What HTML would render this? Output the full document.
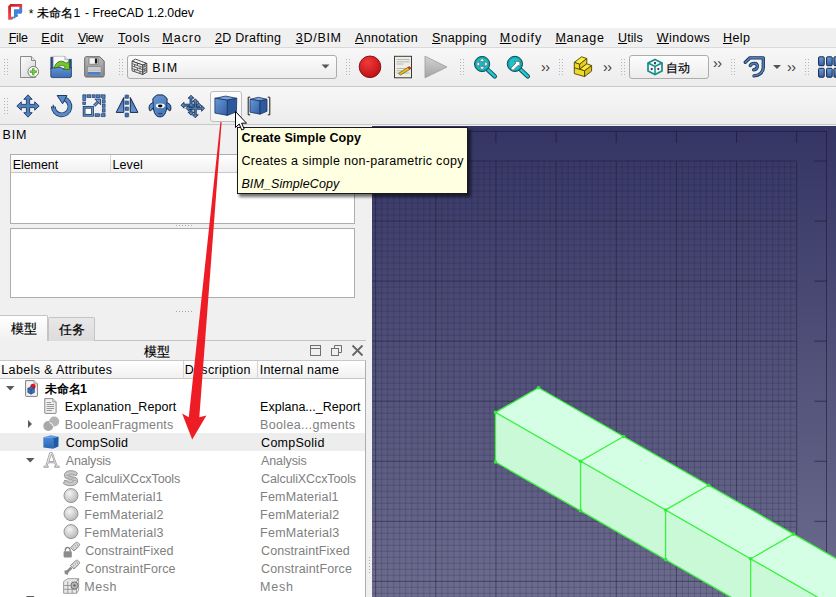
<!DOCTYPE html>
<html><head><meta charset="utf-8">
<style>
*{box-sizing:border-box}
html,body{margin:0;padding:0}
body{width:836px;height:597px;overflow:hidden;position:relative;background:#f0f0f0;font-family:"Liberation Sans",sans-serif;color:#000;font-size:12.5px}
.a{position:absolute}
.t{position:absolute;white-space:nowrap;line-height:1}
.u{text-decoration:underline;text-underline-offset:1px;text-decoration-thickness:1px}
.grip{position:absolute;width:5px;height:17px;background-image:radial-gradient(circle,#b4b4b4 0.8px,transparent 1px);background-size:3px 3px}
.chev{position:absolute;font-size:13px;color:#333;letter-spacing:-1px}
svg{position:absolute;overflow:visible}
</style></head><body>

<!-- title bar -->
<div class="a" style="left:0;top:0;width:836px;height:28px;background:#fff"></div>
<svg style="left:0;top:0" width="30" height="26" viewBox="0 0 30 26">
  <defs><linearGradient id="lr" x1="0" y1="0" x2="0.6" y2="1"><stop offset="0" stop-color="#c8141e"/><stop offset="1" stop-color="#ff5a64"/></linearGradient></defs>
  <path d="M8.2 6.2L10.4 4H22.1V7.5L19.3 10.72V6.8H11V16.7H14.1L11.5 19.7H8.2z" fill="url(#lr)"/>
  <path d="M22.1 6.8V12.3L21.2 13.4H17.2V14.4L18.2 15.4L17.4 17.1L15.9 17L14.8 18.6L13.4 18.2L12.2 19.7H11.2z" fill="#3a86dc"/>
  <path d="M14 9.2H20L21.2 8L22.1 8.6V12.6L21 13.4H17.2V15.5L14 17.5z" fill="#3a86dc"/>
</svg>
<div class="t" style="left:36.5px;top:6.5px;font-size:12px;-webkit-text-stroke:0.25px #000">未命名</div><div class="t" style="left:73.5px;top:7px;font-size:12.3px">1</div>
<div class="t" style="left:85px;top:6.5px;font-size:12px">-</div>

<!-- menubar -->
<div class="a" style="left:0;top:28px;width:836px;height:20px;background:#f0f0f0;border-bottom:1px solid #dadada"></div>

<!-- toolbar 1 -->
<div class="a" style="left:0;top:48px;width:836px;height:39px;background:linear-gradient(#f7f7f7,#ececec);border-bottom:1px solid #c9c9c9"></div>
<!-- toolbar 2 -->
<div class="a" style="left:0;top:87px;width:836px;height:38px;background:linear-gradient(#f7f7f7,#ececec);border-bottom:1px solid #c9c9c9"></div>

<!-- grips -->
<div class="grip" style="left:3px;top:58px"></div>
<div class="grip" style="left:118px;top:58px"></div>
<div class="grip" style="left:345px;top:58px"></div>
<div class="grip" style="left:459px;top:58px"></div>
<div class="grip" style="left:558px;top:58px"></div>
<div class="grip" style="left:620px;top:58px"></div>
<div class="grip" style="left:730px;top:58px"></div>
<div class="grip" style="left:804px;top:58px"></div>
<div class="grip" style="left:3px;top:97px"></div>

<!-- new doc -->
<svg style="left:19px;top:55px" width="20" height="24" viewBox="0 0 20 24">
  <defs><linearGradient id="pg" x1="0" y1="0" x2="1" y2="1"><stop offset="0" stop-color="#fdfdfd"/><stop offset="1" stop-color="#d4d4d4"/></linearGradient></defs>
  <path d="M1.5 1.5h11l4 4v17h-15z" fill="url(#pg)" stroke="#8a8a8a"/>
  <path d="M12.5 1.5v4h4" fill="#e8e8e8" stroke="#8a8a8a"/>
  <circle cx="14.3" cy="16.7" r="5.3" fill="#fafafa" stroke="#7a7a7a"/>
  <path d="M14.3 13.2v7M10.8 16.7h7" stroke="#3c9a1c" stroke-width="2.2"/>
  <path d="M14.3 13.6v6.2M11.2 16.7h6.2" stroke="#7ad23a" stroke-width="1"/>
</svg>
<!-- open -->
<svg style="left:50px;top:56px" width="23" height="23" viewBox="0 0 23 23">
  <defs><linearGradient id="of" x1="0" y1="0" x2="0" y2="1"><stop offset="0" stop-color="#5f92d2"/><stop offset="1" stop-color="#3d6eb4"/></linearGradient></defs>
  <path d="M0.8 1.2h2.6v12h-2.6z" fill="#24508e" stroke="#1a3460" stroke-width="0.6"/>
  <path d="M18.8 3.3h2.6v9h-2.6z" fill="#24508e" stroke="#1a3460" stroke-width="0.6"/>
  <path d="M3.2 0.3h11.6l3.4 3.4v9.5h-15z" fill="#fbfbfb" stroke="#a0a0a0" stroke-width="0.6"/>
  <path d="M14.8 0.3v3.4h3.4" fill="#e0e0e0" stroke="#909090" stroke-width="0.6"/>
  <path d="M0.8 12.2C4 11.6 6 11.8 8.5 11.3C10.5 10.9 12.5 12.6 15 12.9C17 13.1 19 12.1 21.4 11.5V20.2C21.4 21 20.8 21.6 20 21.6H2.2C1.4 21.6 0.8 21 0.8 20.2z" fill="url(#of)" stroke="#1d3560" stroke-width="0.8"/>
  <path d="M4.3 11.9C5 8 8 5.1 11.3 5.2C13.5 5.3 15 6.3 16 7.2L19.3 5.6L19.6 13.6L13 13.2L15.4 11.1C14.5 10.1 13 9.4 11.5 9.6C9.5 9.8 8 10.8 7.3 11.5z" fill="#72c62c" stroke="#2e6a10" stroke-width="0.8" stroke-linejoin="round"/>
</svg>
<!-- save -->
<svg style="left:84px;top:56px" width="21" height="22" viewBox="0 0 21 22">
  <defs><linearGradient id="fg" x1="0" y1="0" x2="0" y2="1"><stop offset="0" stop-color="#b8b8b8"/><stop offset="1" stop-color="#8e8e8e"/></linearGradient></defs>
  <path d="M0.7 2.2c0-.8.7-1.5 1.5-1.5h13.6l4.4 4.4v14.4c0 .8-.7 1.5-1.5 1.5h-16.5c-.8 0-1.5-.7-1.5-1.5z" fill="url(#fg)" stroke="#5a5a5a" stroke-width="0.9"/>
  <rect x="4.8" y="1.8" width="9.6" height="6.6" rx="0.6" fill="#cfcfcf" stroke="#7a7a7a" stroke-width="0.7"/>
  <rect x="6" y="2.5" width="4.5" height="5" fill="#f4f4f4"/>
  <rect x="11" y="2.6" width="2.2" height="4.8" fill="#1a1a1a"/>
  <rect x="3.3" y="10.8" width="13.8" height="8.2" fill="#dcdcdc" stroke="#7a7a7a" stroke-width="0.7"/>
  <path d="M3.6 13h13.2M3.6 14.8h13.2" stroke="#b0b0b0" stroke-width="0.8"/>
  <rect x="3.7" y="16" width="13" height="2.8" fill="#4a80c8"/>
</svg>

<!-- combo -->
<div class="a" style="left:127px;top:55px;width:210px;height:24px;border:1px solid #acacac;border-radius:3px;background:linear-gradient(#fdfdfd,#ececec)"></div>
<svg style="left:131px;top:58px" width="17" height="18" viewBox="0 0 17 18">
  <g stroke="#2a2a2a" stroke-width="0.8" stroke-linejoin="round">
  <path d="M1 3.2L4.4 1.1L15.8 5.4L11.8 7z" fill="#f6f6f6"/>
  <path d="M1 3.2L11.8 7V16.5L1 12.8z" fill="#ececec"/>
  <path d="M11.8 7L15.8 5.4V14.2L11.8 16.5z" fill="#d8d8d8"/>
  </g>
  <g stroke="#4a4a4a" stroke-width="0.8" fill="none">
  <path d="M1 5.6L11.8 9.4M1 8L11.8 11.8M1 10.4L11.8 14.2M11.8 9.4L15.8 7.6M11.8 11.8L15.8 9.8M11.8 14.2L15.8 12"/>
  <path d="M6.4 5.1V7.5M3.7 6.4V8.9M9 8.8V11.2M6.4 9.9V12.3M3.7 11.1V13.6M9 13.2V15.5M13.8 6.2V8.6M13.8 10.8V13.2" stroke-width="0.9"/>
  </g>
</svg>

<svg style="left:321px;top:64px" width="9" height="5" viewBox="0 0 9 5"><path d="M0.5 0.5h8l-4 4z" fill="#555"/></svg>

<!-- macro -->
<svg style="left:358px;top:55px" width="24" height="24" viewBox="0 0 24 24">
  <defs><radialGradient id="rg" cx="0.4" cy="0.3" r="0.8"><stop offset="0" stop-color="#f03a3a"/><stop offset="1" stop-color="#b80c12"/></radialGradient></defs>
  <circle cx="12" cy="11.8" r="10.8" fill="url(#rg)" stroke="#7e0a0a" stroke-width="0.9"/>
</svg>
<svg style="left:393px;top:55px" width="20" height="24" viewBox="0 0 20 24">
  <rect x="1.5" y="1.3" width="17" height="21.5" fill="#eeeee6" stroke="#3a3a3a" stroke-width="1"/>
  <path d="M3.5 4.5h13M3.5 6.8h13M3.5 9h7M3.5 13.5h13M3.5 15.8h6M3.5 18h13" stroke="#b0b0b0" stroke-width="0.9"/>
  <path d="M5.5 18.5l10-6.5 2 2-10 6z" fill="#e6c21a" stroke="#6a5a10" stroke-width="0.7"/>
  <path d="M14.5 12.5l2-1.3 1.8 1.8-1.8 1.4z" fill="#d8202a"/>
</svg>
<svg style="left:424px;top:55px" width="24" height="24" viewBox="0 0 24 24">
  <defs><linearGradient id="gp" x1="0" y1="0" x2="0" y2="1"><stop offset="0" stop-color="#d2d2d2"/><stop offset="1" stop-color="#a4a4a4"/></linearGradient></defs>
  <path d="M1 1.2L23 12 1 22.8z" fill="url(#gp)" stroke="#9a9a9a" stroke-width="0.8"/>
</svg>

<!-- zoom -->
<svg style="left:473px;top:55px" width="24" height="24" viewBox="0 0 24 24">
  <path d="M14.8 14.8l7 6.6" stroke="#0b4e56" stroke-width="4.4" stroke-linecap="round"/>
  <path d="M14.8 14.8l7 6.6" stroke="#22c8d0" stroke-width="2.6" stroke-linecap="round"/>
  <circle cx="9.1" cy="9" r="7.6" fill="#14a6b0" stroke="#0b4e56" stroke-width="1"/>
  <circle cx="9.1" cy="9" r="5.8" fill="#1fc0c8"/>
  <path d="M9.1 3.3l2.5 3h-5zM9.1 14.7l2.5-3h-5zM3.4 9l3-2.5v5zM14.8 9l-3-2.5v5z" fill="#fff" stroke="#333" stroke-width="0.4"/>
  <rect x="7.3" y="7.2" width="3.6" height="3.6" fill="#18b4bc"/>
</svg>
<svg style="left:506px;top:55px" width="24" height="24" viewBox="0 0 24 24">
  <path d="M14.8 14.8l7 6.6" stroke="#0b4e56" stroke-width="4.4" stroke-linecap="round"/>
  <path d="M14.8 14.8l7 6.6" stroke="#22c8d0" stroke-width="2.6" stroke-linecap="round"/>
  <circle cx="8.9" cy="8.9" r="7.6" fill="#14a6b0" stroke="#0b4e56" stroke-width="1"/>
  <circle cx="8.9" cy="8.9" r="5.8" fill="#1fc0c8"/>
  <path d="M4.8 13.2L10 8l-1.6-1.6h5.4v5.4l-1.6-1.6-5.2 5.2z" fill="#fff" stroke="#333" stroke-width="0.5" stroke-linejoin="round"/>
</svg>
<div class="t" style="left:541px;top:59.5px;font-size:14.5px;color:#3a3a3a;letter-spacing:-0.6px">››</div>

<!-- yellow -->
<svg style="left:572px;top:55px" width="22" height="24" viewBox="0 0 22 24">
  <g stroke="#4a420a" stroke-width="0.9" stroke-linejoin="round">
  <path d="M2.3 7.3L9.6 1.8L14.8 3.5L7.6 9.3z" fill="#fbea3a"/>
  <path d="M7.6 9.3L14.8 3.5V8.8L7.6 14.3z" fill="#e6cf1c"/>
  <path d="M7.6 14.3L14.8 8.8L19.6 10.5L12.6 15.8z" fill="#fbea3a"/>
  <path d="M2.3 7.3L7.6 9.3V14.3L12.6 15.8V21.6L2.3 18.6z" fill="#f0da24"/>
  <path d="M12.6 15.8L19.6 10.5V16.1L12.6 21.6z" fill="#dcc416"/>
  <path d="M2.3 12.8L7.6 14.3" fill="none"/>
  </g>
</svg>
<div class="t" style="left:603px;top:59.5px;font-size:14.5px;color:#3a3a3a;letter-spacing:-0.6px">››</div>

<!-- auto button -->
<div class="a" style="left:629px;top:55px;width:80px;height:24px;border:1px solid #acacac;border-radius:3px;background:linear-gradient(#fdfdfd,#ececec)"></div>
<svg style="left:646px;top:58px" width="18" height="18" viewBox="0 0 18 18">
  <path d="M9 1.5l7 3.5v8l-7 3.5-7-3.5v-8z" fill="#f4f4f4" stroke="#168c8c" stroke-width="1.7"/>
  <path d="M2 5l7 3.5 7-3.5M9 8.5v8" fill="none" stroke="#168c8c" stroke-width="1.5"/>
  <path d="M9 4v2.2M4.8 11.3l1.8-.6M13.2 11.3l-1.8-.6" stroke="#111" stroke-width="1.5"/>
</svg>
<div class="t" style="left:665.5px;top:61.5px;font-size:12px;-webkit-text-stroke:0.2px #000">自动</div>
<div class="t" style="left:713px;top:56px;font-size:14.5px;color:#3a3a3a;letter-spacing:-0.6px">››</div>

<!-- hook -->
<svg style="left:743px;top:55px" width="24" height="24" viewBox="0 0 24 24">
  <path d="M2.3 7.3L7 2.8H20.3V12.5C20.3 17.5 16 20.6 11 20.9M7.3 10.6C8 9 9.5 8.3 11.5 8.3C13.3 8.3 14.3 9.5 14.3 11.2C14.3 13 12.8 14.5 10.6 14.8" fill="none" stroke="#1a2e52" stroke-width="3.3" stroke-linecap="round" stroke-linejoin="round"/>
  <path d="M2.3 7.3L7 2.8H20.3V12.5C20.3 17.5 16 20.6 11 20.9M7.3 10.6C8 9 9.5 8.3 11.5 8.3C13.3 8.3 14.3 9.5 14.3 11.2C14.3 13 12.8 14.5 10.6 14.8" fill="none" stroke="#4f7dbc" stroke-width="1.7" stroke-linecap="round" stroke-linejoin="round"/>
</svg>
<svg style="left:773px;top:65px" width="8" height="4" viewBox="0 0 8 4"><path d="M0 0h8l-4 4z" fill="#555"/></svg>
<div class="t" style="left:787px;top:59.5px;font-size:14.5px;color:#3a3a3a;letter-spacing:-0.6px">››</div>

<!-- grid icon -->
<svg style="left:818px;top:56px" width="22" height="22" viewBox="0 0 22 22">
  <defs><linearGradient id="gi" x1="0" y1="0" x2="0" y2="1"><stop offset="0" stop-color="#6e9ed8"/><stop offset="1" stop-color="#3560a6"/></linearGradient></defs>
  <g fill="url(#gi)" stroke="#14244a" stroke-width="1"><rect x="0.6" y="0.8" width="5.6" height="8.9" rx="0.9"/><rect x="0.6" y="12.3" width="5.6" height="8.9" rx="0.9"/><rect x="8.6" y="0.8" width="5.6" height="8.9" rx="0.9"/><rect x="8.6" y="12.3" width="5.6" height="8.9" rx="0.9"/><rect x="15.9" y="0.8" width="5.6" height="8.9" rx="0.9"/><rect x="15.9" y="12.3" width="5.6" height="8.9" rx="0.9"/></g>
</svg>

<!-- ============ toolbar 2 ============ -->
<!-- move -->
<svg style="left:16px;top:94px" width="24" height="24" viewBox="0 0 24 24">
  <path d="M12 0.8l4.2 4.5h-2.6v5.1h5.1v-2.6l4.5 4.2-4.5 4.2v-2.6h-5.1v5.1h2.6l-4.2 4.5-4.2-4.5h2.6v-5.1h-5.1v2.6l-4.5-4.2 4.5-4.2v2.6h5.1v-5.1h-2.6z" fill="#4f82c0" stroke="#1d3a66" stroke-width="0.9" stroke-linejoin="round"/>
</svg>
<!-- rotate -->
<svg style="left:50px;top:94px" width="24" height="24" viewBox="0 0 24 24">
  <path d="M3.3 12.6A8.3 8.3 0 1 0 13.9 4.6" fill="none" stroke="#1d3a66" stroke-width="4.8"/>
  <path d="M3.3 12.6A8.3 8.3 0 1 0 13.9 4.6" fill="none" stroke="#5b8bc8" stroke-width="3.1"/>
  <path d="M3.85 12.4h-1.1" stroke="#1d3a66" stroke-width="3.5"/>
  <path d="M7.1 1.5L16.9 1.5L12.6 9.8z" fill="#5b8bc8" stroke="#1d3a66" stroke-width="1" stroke-linejoin="round"/>
</svg>
<!-- scale -->
<svg style="left:82px;top:94px" width="24" height="24" viewBox="0 0 24 24">
  <g fill="#4f82c4" stroke="#1d3a66" stroke-width="0.7">
   <path d="M0.8 0.8H4V3.6H3.6V6.5H0.8z"/>
   <rect x="5.1" y="0.8" width="3.7" height="2.8"/><rect x="10.1" y="0.8" width="3" height="2.8"/><rect x="14.1" y="0.8" width="4" height="2.8"/>
   <path d="M19.1 0.8H23.1V4.5H20.3V3.6H19.1z"/>
   <rect x="0.8" y="8" width="2.8" height="2.6"/>
   <rect x="20.3" y="5.8" width="2.8" height="3.3"/><rect x="20.3" y="10.6" width="2.8" height="2.7"/><rect x="20.3" y="14.8" width="2.8" height="3.3"/>
   <path d="M20.3 19.6H23.1V22.6H19.1V19.8H20.3z"/>
   <rect x="13" y="19.8" width="4.6" height="2.8"/>
  </g>
  <rect x="2.1" y="13.3" width="8.4" height="8" fill="#fff" stroke="#1d3a66" stroke-width="2.7"/>
  <rect x="2.1" y="13.3" width="8.4" height="8" fill="none" stroke="#6b9ad4" stroke-width="1"/>
  <path d="M12.2 11.8L16.2 7.8" stroke="#1d3a66" stroke-width="3"/>
  <path d="M12.2 11.8L16.2 7.8" stroke="#6b9ad4" stroke-width="1.3"/>
  <path d="M12.8 5h5.8v5.8z" fill="#6b9ad4" stroke="#1d3a66" stroke-width="0.9" stroke-linejoin="round"/>
</svg>
<!-- mirror -->
<svg style="left:115px;top:94px" width="24" height="24" viewBox="0 0 24 24">
  <defs><linearGradient id="mg" x1="0" y1="0" x2="0" y2="1"><stop offset="0" stop-color="#3d6db0"/><stop offset="1" stop-color="#6d9ad6"/></linearGradient></defs>
  <path d="M1.2 18.4L8.8 3.5V18.4z" fill="url(#mg)" stroke="#14284a" stroke-width="1" stroke-linejoin="round"/>
  <path d="M22.9 18.4L15.3 3.5V18.4z" fill="url(#mg)" stroke="#14284a" stroke-width="1" stroke-linejoin="round"/>
  <g fill="#3d6db0" stroke="#1d3a66" stroke-width="0.5"><rect x="10" y="0.9" width="3.7" height="3.5" rx="0.6"/><rect x="10" y="6.9" width="3.7" height="3.6" rx="0.6"/><rect x="10" y="12.9" width="3.7" height="3.6" rx="0.6"/><rect x="10" y="19" width="3.7" height="4" rx="0.6"/></g>
</svg>
<!-- sheep -->
<svg style="left:148px;top:94px" width="24" height="24" viewBox="0 0 24 24">
  <defs><linearGradient id="sg" x1="0" y1="0" x2="1" y2="1"><stop offset="0" stop-color="#6f9cd6"/><stop offset="1" stop-color="#3d6cae"/></linearGradient></defs>
  <path d="M5.2 8.3C4.3 6 4.8 3.6 7 2.6C8.3 0.9 10.5 0.5 12 1.1C13.5 0.5 15.7 0.9 17 2.6C19.2 3.6 19.7 6 18.8 8.3L21.8 10.3C23.2 11.8 23.2 15 22.3 16.6C21.2 17.2 19.6 15.6 18.8 13.6C18.4 17 17 20.5 15.5 21.8C14.5 22.6 13 22.9 12 22.9C11 22.9 9.5 22.6 8.5 21.8C7 20.5 5.6 17 5.2 13.6C4.4 15.6 2.8 17.2 1.7 16.6C0.8 15 0.8 11.8 2.2 10.3z" fill="url(#sg)" stroke="#14284a" stroke-width="1" stroke-linejoin="round"/>
  <path d="M5.5 8.5C5.2 10 5.3 12 5.4 13.5M18.5 8.5C18.8 10 18.7 12 18.6 13.5" fill="none" stroke="#14284a" stroke-width="0.7"/>
  <ellipse cx="12.3" cy="11.8" rx="4.5" ry="2.3" fill="#fff"/>
  <ellipse cx="12.2" cy="12" rx="2.3" ry="1.4" fill="#0a0a0a"/>
  <path d="M10.3 19.2c1.1.7 2.6.7 3.7 0" stroke="#14284a" stroke-width="0.9" fill="none"/>
</svg>
<!-- move array -->
<svg style="left:181px;top:94px" width="24" height="24" viewBox="0 0 24 24">
  <g fill="#4f82c0" stroke="#14284a" stroke-width="0.8" stroke-linejoin="round">
  <path d="M10 1.2l3 3h-2v6h6v-2l3 3-3 3v-2h-6v6h2l-3 3-3-3h2v-6h-6v2l-3-3 3-3v2h6v-6h-2z"/>
  <path d="M14.3 4.8l3 3h-2v5.5h5.3v-2l3 3-3 3v-2h-5.3v5.5h2l-3 3-3-3h2v-5.5h-5.3v2l-3-3 3-3v2h5.3v-5.5h-2z"/>
  </g>
</svg>
<!-- simple copy pressed -->
<div class="a" style="left:210px;top:91px;width:32px;height:31px;border:1px solid #bdbdbd;border-radius:3px;background:linear-gradient(#fcfcfc,#f4f4f4)"></div>
<svg style="left:214px;top:95px" width="24" height="22" viewBox="0 0 24 22">
  <defs><linearGradient id="cf" x1="0" y1="0" x2="1" y2="1"><stop offset="0" stop-color="#6a9ad6"/><stop offset="1" stop-color="#2f5ea6"/></linearGradient></defs>
  <path d="M0.9 3.3l10.7-2.2 11.2 2.2-9.4 1.8z" fill="#7aa6e0" stroke="#1d3560" stroke-width="0.8" stroke-linejoin="round"/>
  <path d="M0.9 3.3l12.5 1.8v15.3l-12.5-2.3z" fill="url(#cf)" stroke="#1d3560" stroke-width="0.8" stroke-linejoin="round"/>
  <path d="M13.4 5.1l9.4-1.8-.4 13.5-9 3.6z" fill="#2d5a9c" stroke="#1d3560" stroke-width="0.8" stroke-linejoin="round"/>
</svg>
<!-- compound -->
<svg style="left:247px;top:96px" width="24" height="20" viewBox="0 0 24 20">
  <path d="M3.2 1.2H1.2v17.6h2M20.8 1.2h2v17.6h-2" fill="none" stroke="#1a1a1a" stroke-width="1"/>
  <path d="M3 3.3l8.5-2 8.5 2-7 1.6z" fill="#7aa6e0" stroke="#1d3560" stroke-width="0.8" stroke-linejoin="round"/>
  <path d="M3 3.3l10 1.6v13.3l-10-2z" fill="url(#cf)" stroke="#1d3560" stroke-width="0.8" stroke-linejoin="round"/>
  <path d="M13 4.9l7-1.6v12l-7 2.9z" fill="#2d5a9c" stroke="#1d3560" stroke-width="0.8" stroke-linejoin="round"/>
</svg>


<!-- left panel -->
<div class="a" style="left:10px;top:154px;width:345px;height:70px;background:#fff;border:1px solid #adadad"></div>
<div class="a" style="left:11px;top:155px;width:343px;height:18px;background:linear-gradient(#fff,#f0f0f0);border-bottom:1px solid #c8c8c8"></div>
<div class="a" style="left:110px;top:155px;width:1px;height:18px;background:#d5d5d5"></div>
<div class="a" style="left:176px;top:225px;width:17px;height:1px;background:repeating-linear-gradient(90deg,#a8a8a8 0 1px,transparent 1px 3px)"></div>
<div class="a" style="left:10px;top:228px;width:345px;height:70px;background:#fff;border:1px solid #adadad"></div>
<div class="a" style="left:369px;top:557px;width:1px;height:17px;background:repeating-linear-gradient(180deg,#a8a8a8 0 1px,transparent 1px 3px)"></div>
<div class="a" style="left:176px;top:311px;width:17px;height:1px;background:repeating-linear-gradient(90deg,#a8a8a8 0 1px,transparent 1px 3px)"></div>

<!-- tabs -->
<div class="a" style="left:0;top:340px;width:366px;height:1px;background:#c4c4c4"></div>
<div class="a" style="left:48px;top:317px;width:47px;height:24px;background:linear-gradient(#e8e8e8,#dcdcdc);border:1px solid #c4c4c4;border-bottom:none;border-radius:2px 2px 0 0"></div>
<div class="a" style="left:0;top:315px;width:48px;height:26px;background:linear-gradient(#ffffff,#f0f0f0);border:1px solid #c4c4c4;border-left:none;border-bottom:none;border-radius:0 2px 0 0"></div>
<div class="t" style="left:11px;top:323px;font-size:12.5px;-webkit-text-stroke:0.2px #000">模型</div>
<div class="t" style="left:59px;top:323.5px;font-size:12.5px;-webkit-text-stroke:0.2px #000">任务</div>

<!-- model title -->
<div class="t" style="left:144px;top:345.5px;font-size:12.5px;-webkit-text-stroke:0.2px #000">模型</div>
<svg style="left:309px;top:344px" width="13" height="13" viewBox="0 0 13 13"><rect x="1.5" y="1.5" width="10" height="10" fill="none" stroke="#707070"/><line x1="1.5" y1="4.5" x2="11.5" y2="4.5" stroke="#707070"/></svg>
<svg style="left:330px;top:344px" width="13" height="13" viewBox="0 0 13 13"><rect x="1.5" y="4.5" width="7" height="7" fill="none" stroke="#707070"/><path d="M4.5 4.5V1.5h7v7h-3" fill="none" stroke="#707070"/></svg>
<svg style="left:351px;top:344px" width="13" height="13" viewBox="0 0 13 13"><path d="M1.5 1.5L11.5 11.5M11.5 1.5L1.5 11.5" stroke="#666" stroke-width="1.8"/></svg>

<!-- tree -->
<div class="a" style="left:0;top:360px;width:366px;height:240px;background:#fff;border-right:1px solid #adadad;border-top:1px solid #c8c8c8"></div>
<div class="a" style="left:0;top:361px;width:365px;height:18px;background:linear-gradient(#fff,#f0f0f0);border-bottom:1px solid #c8c8c8"></div>
<div class="a" style="left:183px;top:361px;width:1px;height:18px;background:#d5d5d5"></div>
<div class="a" style="left:257px;top:361px;width:1px;height:18px;background:#d5d5d5"></div>

<div class="a" style="left:0;top:433px;width:365px;height:18px;background:#ededed"></div>
<div class="t" style="left:44.5px;top:382.5px;font-size:12px;font-weight:bold">未命名</div><div class="t" style="left:80px;top:383px;font-size:12.5px;font-weight:bold">1</div>
<!-- tree arrows -->
<svg style="left:6px;top:386px" width="9" height="5" viewBox="0 0 9 5"><path d="M0 0h8.5l-4.25 4.5z" fill="#5a5a5a"/></svg>
<svg style="left:28px;top:420px" width="5" height="9" viewBox="0 0 5 9"><path d="M0 0v8l4-4z" fill="#5a5a5a"/></svg>
<svg style="left:26px;top:458px" width="9" height="5" viewBox="0 0 9 5"><path d="M0 0h8.5l-4.25 4.5z" fill="#5a5a5a"/></svg>
<svg style="left:26px;top:595.5px" width="9" height="5" viewBox="0 0 9 5"><path d="M0 0h8.5l-4.25 4.5z" fill="#5a5a5a"/></svg>

<!-- document icon -->
<svg style="left:25px;top:380px" width="13" height="17" viewBox="0 0 13 17">
  <path d="M0.6 0.6h8.5l3.3 3.3v11.9c0 .4-.3.6-.6.6h-10.6c-.4 0-.6-.3-.6-.6z" fill="#f4f4f4" stroke="#707070" stroke-width="0.9"/>
  <path d="M8.9 0.6v3.3h3.3" fill="#ddd" stroke="#8a8a8a" stroke-width="0.7"/>
  <circle cx="8" cy="6.3" r="2.6" fill="#e2141c"/>
  <path d="M2.8 8.3l3.3-1.6 3.3 1.6v4.2l-3.3 1.7-3.3-1.7z" fill="#3b72bb" stroke="#1c3c6c" stroke-width="0.6"/>
  <path d="M2.8 8.3l3.3 1.6 3.3-1.6M6.1 9.9v4.3" fill="none" stroke="#1c3c6c" stroke-width="0.6"/>
</svg>
<!-- text doc -->
<svg style="left:44px;top:398px" width="13" height="16" viewBox="0 0 13 16">
  <path d="M0.8 0.6h8l3.3 3.3v11c0 .3-.3.5-.5.5h-10.3c-.3 0-.5-.2-.5-.5z" fill="#f2f2f2" stroke="#7a7a7a" stroke-width="0.9"/>
  <path d="M8.8 0.6v3.3h3.3" fill="#ddd" stroke="#8a8a8a" stroke-width="0.7"/>
  <path d="M2.6 4.5h4.5M2.6 6.5h7.5M2.6 8.5h7.5M2.6 10.5h7.5M2.6 12.5h5.5" stroke="#8c8c8c" stroke-width="0.9"/>
</svg>
<!-- boolean fragments -->
<svg style="left:43px;top:416px" width="17" height="16" viewBox="0 0 17 16">
  <circle cx="5.3" cy="10" r="5" fill="#a8a8a8"/>
  <circle cx="11.2" cy="5.5" r="5" fill="#b4b4b4"/>
  <path d="M6.5 6.5a5 5 0 0 1 3.8 3.8" stroke="#fff" stroke-width="0.9" fill="none"/>
</svg>
<!-- blue cube -->
<svg style="left:43px;top:435px" width="16" height="14" viewBox="0 0 16 14">
  <defs><linearGradient id="bc" x1="0" y1="0" x2="0" y2="1"><stop offset="0" stop-color="#4a8ad8"/><stop offset="1" stop-color="#2a64b4"/></linearGradient></defs>
  <path d="M0.3 2.2l7.5-1.9 7.8 1.5-5.4 1.3z" fill="#5c9be0"/>
  <path d="M0.3 2.2l9.9 0.9v10.6l-9.8-1.2z" fill="url(#bc)"/>
  <path d="M10.2 3.1l5.4-1.3-.2 9.7-5.2 2.2z" fill="#1f5aa6"/>
</svg>
<!-- A -->
<svg style="left:43px;top:452px" width="17" height="16" viewBox="0 0 17 16">
  <path d="M6.7 0.7h2.6l5 13.6h2v1h-4.8v-1h1.3l-1.2-3.5h-6.4l-1.2 3.5h1.4v1h-4.6v-1h1.8z M5.8 9.5h5.4l-2.7-7.5z" fill="#f2f2f2" stroke="#a0a0a0" stroke-width="0.9" fill-rule="evenodd"/>
</svg>
<!-- S -->
<svg style="left:63px;top:470px" width="17" height="17" viewBox="0 0 17 17">
  <path d="M14.5 3.2c-1.5-1.6-3.8-2.5-6.5-2.5-4 0-6.6 1.8-6.6 4.6 0 3 3 3.8 6.2 4.3 2 .3 2.8.6 2.8 1.3 0 .8-1.2 1.2-3 1.2-2 0-4-.7-5.5-2l-1.5 3.2c1.8 1.6 4.2 2.4 7 2.4 4.4 0 7.2-1.8 7.2-4.8 0-3-2.8-3.8-6-4.3-2-.3-3-.6-3-1.3s1-1.1 2.6-1.1c1.6 0 3.2.5 4.6 1.5z" fill="#c8c8c8" stroke="#8a8a8a" stroke-width="0.9"/>
  <path d="M2.5 5.5h12M2.5 8h12M2.5 10.5h12" stroke="#9a9a9a" stroke-width="0.5"/>
</svg>
<!-- spheres -->
<svg style="left:63px;top:488px" width="16" height="16" viewBox="0 0 16 16"><defs><radialGradient id="sp" cx="0.4" cy="0.35" r="0.7"><stop offset="0" stop-color="#f4f4f4"/><stop offset="1" stop-color="#b4b4b4"/></radialGradient></defs><circle cx="8" cy="7.6" r="7" fill="url(#sp)" stroke="#8c8c8c" stroke-width="0.9"/></svg>
<svg style="left:63px;top:506px" width="16" height="16" viewBox="0 0 16 16"><circle cx="8" cy="7.6" r="7" fill="url(#sp)" stroke="#8c8c8c" stroke-width="0.9"/></svg>
<svg style="left:63px;top:524px" width="16" height="16" viewBox="0 0 16 16"><circle cx="8" cy="7.6" r="7" fill="url(#sp)" stroke="#8c8c8c" stroke-width="0.9"/></svg>
<!-- constraint fixed -->
<svg style="left:63px;top:542px" width="17" height="16" viewBox="0 0 17 16">
  <path d="M7.5 5.5L12.5 0.8C13.3 0 14.5 0 15.3 .8L16 1.5C16.8 2.3 16.8 3.5 16 4.3L11 9z" fill="#dadada" stroke="#8a8a8a" stroke-width="0.9"/>
  <path d="M9.5 4.5l1.2 1.2M11.5 2.8l1.2 1.2M13.5 1.5l1.2 1.2M10.5 6.5l1.2 1.2M12.5 4.8l1.2 1.2M14.2 3.2l1 1" stroke="#9a9a9a" stroke-width="0.9"/>
  <path d="M2.3 9.5v-1.6a2.4 2.4 0 0 1 4.8 0v1.6" fill="none" stroke="#8a8a8a" stroke-width="1.4"/>
  <rect x="0.6" y="9.2" width="8.2" height="6.2" rx="0.8" fill="#8c8c8c"/>
</svg>
<!-- constraint force -->
<svg style="left:63px;top:560px" width="17" height="16" viewBox="0 0 17 16">
  <path d="M7.5 5.5L12.5 0.8C13.3 0 14.5 0 15.3 .8L16 1.5C16.8 2.3 16.8 3.5 16 4.3L11 9z" fill="#dadada" stroke="#8a8a8a" stroke-width="0.9"/>
  <path d="M9.5 4.5l1.2 1.2M11.5 2.8l1.2 1.2M13.5 1.5l1.2 1.2M10.5 6.5l1.2 1.2M12.5 4.8l1.2 1.2M14.2 3.2l1 1" stroke="#9a9a9a" stroke-width="0.9"/>
  <path d="M2.2 13.8L8.5 7.5" stroke="#8a8a8a" stroke-width="2.6"/>
  <path d="M0.8 11L5 15.2L5.5 9.8z" fill="#8a8a8a"/>
</svg>
<!-- mesh -->
<svg style="left:63px;top:578px" width="17" height="16" viewBox="0 0 17 16">
  <path d="M0.6 3.5l4-2.8h11l-2 2.8v11.8h-13z" fill="#e8e8e8" stroke="#8a8a8a" stroke-width="0.8"/>
  <path d="M0.6 7.5h13M0.6 11.3h13M4.8 3.5v11.8M9.2 3.5v11.8M13.6 3.5l2-2.8v11.3l-2 3.3" fill="none" stroke="#8a8a8a" stroke-width="0.8"/>
  <circle cx="11.5" cy="7.5" r="3.6" fill="#b8b8b8" stroke="#6a6a6a" stroke-width="0.9"/>
  <circle cx="11.5" cy="7.5" r="1.3" fill="#6a6a6a"/>
</svg>


<!-- viewport -->
<div class="a" style="left:372px;top:126px;width:464px;height:471px;background:linear-gradient(#353565 0%,#6c6c8e 100%)"></div>
<svg style="left:372px;top:126px;overflow:hidden" width="464" height="471"><g transform="translate(-372,-126)"><path d="M381.66 161V597M387.68 161V597M393.69 161V597M399.71 161V597M405.72 161V597M411.74 161V597M417.75 161V597M423.77 161V597M429.78 161V597M441.81 161V597M447.83 161V597M453.84 161V597M459.86 161V597M465.88 161V597M471.89 161V597M477.90 161V597M483.92 161V597M489.93 161V597M501.96 161V597M507.98 161V597M514.00 161V597M520.01 161V597M526.02 161V597M532.04 161V597M538.05 161V597M544.07 161V597M550.09 161V597M562.12 161V597M568.13 161V597M574.14 161V597M580.16 161V597M586.17 161V597M592.19 161V597M598.20 161V597M604.22 161V597M610.23 161V597M622.26 161V597M628.28 161V597M634.29 161V597M640.31 161V597M646.33 161V597M652.34 161V597M658.36 161V597M664.37 161V597M670.38 161V597M682.41 161V597M688.43 161V597M694.44 161V597M700.46 161V597M706.47 161V597M712.49 161V597M718.50 161V597M724.52 161V597M730.53 161V597M742.56 161V597M748.58 161V597M754.60 161V597M760.61 161V597M766.62 161V597M772.64 161V597M778.65 161V597M784.67 161V597M790.68 161V597M372 167.00H796.4M372 173.01H796.4M372 179.01H796.4M372 185.02H796.4M372 191.03H796.4M372 197.03H796.4M372 203.03H796.4M372 209.04H796.4M372 215.05H796.4M372 227.06H796.4M372 233.06H796.4M372 239.06H796.4M372 245.07H796.4M372 251.07H796.4M372 257.08H796.4M372 263.08H796.4M372 269.09H796.4M372 275.10H796.4M372 287.11H796.4M372 293.11H796.4M372 299.12H796.4M372 305.12H796.4M372 311.12H796.4M372 317.13H796.4M372 323.13H796.4M372 329.14H796.4M372 335.14H796.4M372 347.15H796.4M372 353.16H796.4M372 359.16H796.4M372 365.17H796.4M372 371.17H796.4M372 377.18H796.4M372 383.19H796.4M372 389.19H796.4M372 395.19H796.4M372 407.20H796.4M372 413.21H796.4M372 419.21H796.4M372 425.22H796.4M372 431.23H796.4M372 437.23H796.4M372 443.24H796.4M372 449.24H796.4M372 455.25H796.4M372 467.25H796.4M372 473.26H796.4M372 479.26H796.4M372 485.27H796.4M372 491.27H796.4M372 497.28H796.4M372 503.28H796.4M372 509.29H796.4M372 515.30H796.4M372 527.31H796.4M372 533.31H796.4M372 539.32H796.4M372 545.32H796.4M372 551.33H796.4M372 557.33H796.4M372 563.34H796.4M372 569.34H796.4M372 575.35H796.4M372 587.36H796.4M372 593.36H796.4" stroke="rgba(20,20,45,0.17)" stroke-width="1" fill="none"/><path d="M375.65 161V597M435.80 161V597M495.95 161V597M556.10 161V597M616.25 161V597M676.40 161V597M736.55 161V597M796.70 161V597M372 161.00H796.4M372 221.05H796.4M372 281.10H796.4M372 341.15H796.4M372 401.20H796.4M372 461.25H796.4M372 521.30H796.4M372 581.35H796.4" stroke="rgba(20,20,40,0.45)" stroke-width="1" fill="none"/><path d="M372 131.3H826.5M826.5 131.3V597M375.65 131.3V143M435.80 131.3V143M495.95 131.3V143M556.10 131.3V143M616.25 131.3V143M676.40 131.3V143M736.55 131.3V143M796.70 131.3V143M814.3 161.00H826.5M814.3 221.05H826.5M814.3 281.10H826.5M814.3 341.15H826.5M814.3 401.20H826.5M814.3 461.25H826.5M814.3 521.30H826.5M814.3 581.35H826.5" stroke="rgba(20,20,40,0.55)" stroke-width="1" fill="none"/><polygon points="495.50,412.40 920.75,656.40 920.75,706.00 495.50,462.00" fill="#c9f9d6"/><polygon points="495.50,412.40 538.50,387.70 963.75,631.70 920.75,656.40" fill="#d5ffe4"/><path d="M495.50 412.40L920.75 656.40M495.50 462.00L920.75 706.00M538.50 387.70L963.75 631.70M495.50 462.00L495.50 412.40L538.50 387.70M580.55 510.80L580.55 461.20L623.55 436.50M665.60 559.60L665.60 510.00L708.60 485.30M750.65 608.40L750.65 558.80L793.65 534.10M835.70 657.20L835.70 607.60L878.70 582.90" stroke="#3cf23f" stroke-width="1.3" fill="none"/><circle cx="495.50" cy="412.40" r="1.8" fill="#33e83a"/><circle cx="495.50" cy="462.00" r="1.8" fill="#33e83a"/><circle cx="538.50" cy="387.70" r="1.8" fill="#33e83a"/><circle cx="580.55" cy="461.20" r="1.8" fill="#33e83a"/><circle cx="580.55" cy="510.80" r="1.8" fill="#33e83a"/><circle cx="623.55" cy="436.50" r="1.8" fill="#33e83a"/><circle cx="665.60" cy="510.00" r="1.8" fill="#33e83a"/><circle cx="665.60" cy="559.60" r="1.8" fill="#33e83a"/><circle cx="708.60" cy="485.30" r="1.8" fill="#33e83a"/><circle cx="750.65" cy="558.80" r="1.8" fill="#33e83a"/><circle cx="750.65" cy="608.40" r="1.8" fill="#33e83a"/><circle cx="793.65" cy="534.10" r="1.8" fill="#33e83a"/><circle cx="835.70" cy="607.60" r="1.8" fill="#33e83a"/><circle cx="835.70" cy="657.20" r="1.8" fill="#33e83a"/><circle cx="878.70" cy="582.90" r="1.8" fill="#33e83a"/></g></svg>

<!-- tooltip -->
<div class="a" style="left:239px;top:130px;width:232px;height:67px;background:rgba(0,0,0,0.55);filter:blur(1.5px)"></div>
<div class="a" style="left:237px;top:127px;width:231px;height:67px;background:#ffffe1;border:1px solid #1a1a1a"></div>
<div class="t" style="left:28.70px;top:8.00px;font-size:12px">*</div>
<div class="t" style="left:92.50px;top:7.00px;font-size:12.3px;letter-spacing:-0.026px">FreeCAD 1.2.0dev</div>
<div class="t" style="left:8.70px;top:32.00px;font-size:12.5px;letter-spacing:-0.330px"><span class="u">F</span>ile</div>
<div class="t" style="left:41.30px;top:32.00px;font-size:12.5px;letter-spacing:0.245px"><span class="u">E</span>dit</div>
<div class="t" style="left:77.90px;top:32.00px;font-size:12.5px;letter-spacing:-0.480px"><span class="u">V</span>iew</div>
<div class="t" style="left:118.00px;top:32.00px;font-size:12.5px;letter-spacing:0.642px"><span class="u">T</span>ools</div>
<div class="t" style="left:162.30px;top:32.00px;font-size:12.5px;letter-spacing:0.981px"><span class="u">M</span>acro</div>
<div class="t" style="left:215.00px;top:32.00px;font-size:12.5px;letter-spacing:0.273px"><span class="u">2</span>D Drafting</div>
<div class="t" style="left:295.80px;top:32.00px;font-size:12.5px;letter-spacing:0.708px"><span class="u">3</span>D/BIM</div>
<div class="t" style="left:355.00px;top:32.00px;font-size:12.5px;letter-spacing:0.331px"><span class="u">A</span>nnotation</div>
<div class="t" style="left:432.00px;top:32.00px;font-size:12.5px;letter-spacing:0.261px"><span class="u">S</span>napping</div>
<div class="t" style="left:499.80px;top:32.00px;font-size:12.5px;letter-spacing:0.927px"><span class="u">M</span>odify</div>
<div class="t" style="left:555.40px;top:32.00px;font-size:12.5px;letter-spacing:0.676px"><span class="u">M</span>anage</div>
<div class="t" style="left:618.00px;top:32.00px;font-size:12.5px;letter-spacing:0.111px"><span class="u">U</span>tils</div>
<div class="t" style="left:656.80px;top:32.00px;font-size:12.5px;letter-spacing:0.390px"><span class="u">W</span>indows</div>
<div class="t" style="left:723.00px;top:32.00px;font-size:12.5px;letter-spacing:0.415px"><span class="u">H</span>elp</div>
<div class="t" style="left:152.30px;top:62.00px;font-size:12.5px;letter-spacing:1.295px">BIM</div>
<div class="t" style="left:2.60px;top:129.00px;font-size:12.5px;letter-spacing:0.795px">BIM</div>
<div class="t" style="left:12.70px;top:159.00px;font-size:12.5px;letter-spacing:-0.064px">Element</div>
<div class="t" style="left:112.50px;top:159.00px;font-size:12.5px;letter-spacing:0.099px">Level</div>
<div class="t" style="left:1.30px;top:364.00px;font-size:12.5px;letter-spacing:0.363px">Labels &amp; Attributes</div>
<div class="t" style="left:184.70px;top:364.00px;font-size:12.5px;letter-spacing:0.323px">Description</div>
<div class="t" style="left:259.70px;top:364.00px;font-size:12.5px;letter-spacing:0.235px">Internal name</div>
<div class="t" style="left:241.40px;top:132.00px;font-size:12.5px;letter-spacing:0.086px;font-weight:bold">Create Simple Copy</div>
<div class="t" style="left:241.40px;top:155.00px;font-size:12.5px;letter-spacing:0.310px">Creates a simple non-parametric copy</div>
<div class="t" style="left:241.40px;top:178.00px;font-size:12.5px;letter-spacing:0.099px;font-style:italic">BIM_SimpleCopy</div>
<div class="t" style="left:64.80px;top:401.00px;font-size:12.5px;letter-spacing:0.099px">Explanation_Report</div>
<div class="t" style="left:260.10px;top:401.00px;font-size:12.5px;letter-spacing:0.013px">Explana..._Report</div>
<div class="t" style="left:64.80px;top:419.00px;font-size:12.5px;letter-spacing:0.189px;color:#808080">BooleanFragments</div>
<div class="t" style="left:260.10px;top:419.00px;font-size:12.5px;letter-spacing:0.330px;color:#808080">Boolea...gments</div>
<div class="t" style="left:65.80px;top:437.00px;font-size:12.5px;letter-spacing:0.127px">CompSolid</div>
<div class="t" style="left:261.10px;top:437.00px;font-size:12.5px;letter-spacing:0.264px">CompSolid</div>
<div class="t" style="left:65.80px;top:455.00px;font-size:12.5px;letter-spacing:-0.185px;color:#808080">Analysis</div>
<div class="t" style="left:261.10px;top:455.00px;font-size:12.5px;letter-spacing:-0.142px;color:#808080">Analysis</div>
<div class="t" style="left:85.30px;top:473.00px;font-size:12.5px;letter-spacing:-0.107px;color:#808080">CalculiXCcxTools</div>
<div class="t" style="left:261.10px;top:473.00px;font-size:12.5px;letter-spacing:-0.107px;color:#808080">CalculiXCcxTools</div>
<div class="t" style="left:84.30px;top:491.00px;font-size:12.5px;letter-spacing:0.177px;color:#808080">FemMaterial1</div>
<div class="t" style="left:260.10px;top:491.00px;font-size:12.5px;letter-spacing:0.186px;color:#808080">FemMaterial1</div>
<div class="t" style="left:84.30px;top:509.00px;font-size:12.5px;letter-spacing:0.249px;color:#808080">FemMaterial2</div>
<div class="t" style="left:260.10px;top:509.00px;font-size:12.5px;letter-spacing:0.249px;color:#808080">FemMaterial2</div>
<div class="t" style="left:84.30px;top:527.00px;font-size:12.5px;letter-spacing:0.249px;color:#808080">FemMaterial3</div>
<div class="t" style="left:260.10px;top:527.00px;font-size:12.5px;letter-spacing:0.249px;color:#808080">FemMaterial3</div>
<div class="t" style="left:85.30px;top:545.00px;font-size:12.5px;letter-spacing:0.044px;color:#808080">ConstraintFixed</div>
<div class="t" style="left:261.10px;top:545.00px;font-size:12.5px;letter-spacing:0.073px;color:#808080">ConstraintFixed</div>
<div class="t" style="left:85.30px;top:563.00px;font-size:12.5px;letter-spacing:0.095px;color:#808080">ConstraintForce</div>
<div class="t" style="left:261.10px;top:563.00px;font-size:12.5px;letter-spacing:0.138px;color:#808080">ConstraintForce</div>
<div class="t" style="left:84.30px;top:581.00px;font-size:12.5px;letter-spacing:0.562px;color:#808080">Mesh</div>
<div class="t" style="left:260.10px;top:581.00px;font-size:12.5px;letter-spacing:0.728px;color:#808080">Mesh</div><!-- red arrow -->
<svg style="left:0;top:0" width="836" height="597" viewBox="0 0 836 597">
  <path d="M220.4 121.8L221.6 122.2L199.3 417.2L206.4 415.5L192.2 439.4L182.1 413.4L188.8 417.2z" fill="#ee1c25"/>
</svg>
<!-- cursor -->
<svg style="left:235px;top:111px" width="13" height="20" viewBox="0 0 13 20">
  <path d="M0.5 0.5V16.5L4.2 13L6.8 19L9.2 18L6.6 12.2H11.5z" fill="#fff" stroke="#000" stroke-width="1" stroke-linejoin="miter"/>
</svg>
</body></html>
